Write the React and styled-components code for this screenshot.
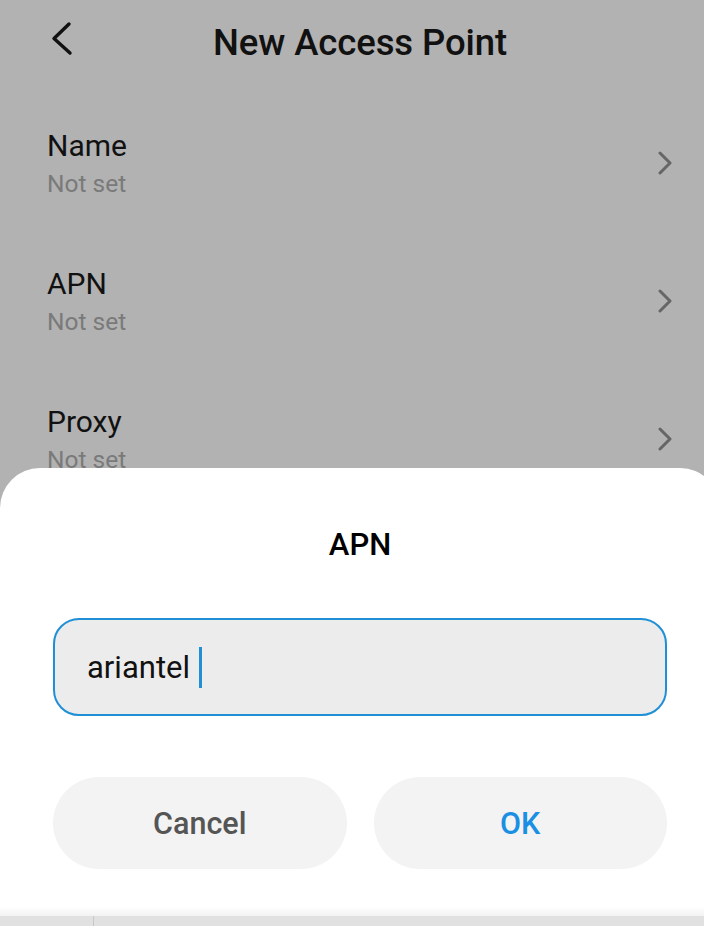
import React from "react";
import styled, { createGlobalStyle } from "styled-components";

const GlobalStyle = createGlobalStyle`
    html, body {
        margin: 0;
        padding: 0;
        background: #b2b2b2;
        font-family: Roboto, "Noto Sans", "Liberation Sans", sans-serif;
    }
`;

const Viewport = styled.div`
    width: 704px;
    height: 926px;
    overflow: hidden;
`;

const Screen = styled.div`
    position: relative;
    width: 720px;
    height: 926px;
    background: #b2b2b2;
`;

const Header = styled.div`
    display: flex;
    align-items: center;
    justify-content: center;
    position: relative;
    height: 84px;
`;

const BackButton = styled.div`
    position: absolute;
    left: 48px;
    top: 20px;
    width: 30px;
    height: 38px;
`;

const Title = styled.h1`
    margin: 0;
    font-size: 36.5px;
    font-weight: 500;
    color: #111;
    letter-spacing: -0.1px;
`;

const List = styled.div`
    display: flex;
    flex-direction: column;
    padding-top: 45px;
`;

const Row = styled.div`
    display: flex;
    justify-content: space-between;
    align-items: flex-start;
    height: 138px;
    padding: 0 47px 0 47px;
    box-sizing: border-box;
`;

const RowText = styled.div`
    display: flex;
    flex-direction: column;
    gap: 6px;
`;

const Label = styled.div`
    font-size: 30px;
    line-height: 34px;
    color: #111;
`;

const Sub = styled.div`
    font-size: 24.5px;
    line-height: 30px;
    color: #7a7a7a;
`;

const Chevron = styled.div`
    display: flex;
    margin-top: 22px;
`;

const Sheet = styled.div`
    position: absolute;
    left: 0;
    right: 0;
    bottom: 0;
    height: 458px;
    background: #fff;
    border-radius: 40px 40px 0 0;
    display: flex;
    flex-direction: column;
`;

const SheetTitle = styled.div`
    text-align: center;
    font-size: 31px;
    font-weight: 500;
    color: #000;
    margin-top: 59px;
    line-height: 36px;
`;

const InputBox = styled.div`
    margin: 55px 53px 0 53px;
    height: 98px;
    box-sizing: border-box;
    border: 2px solid #1f8fd6;
    border-radius: 26px;
    background: #ececec;
    display: flex;
    align-items: center;
    padding-left: 32px;
    font-size: 31px;
    color: #111;
`;

const Caret = styled.span`
    display: inline-block;
    width: 3px;
    height: 41px;
    background: #1f8fd6;
    margin-left: 9px;
`;

const Buttons = styled.div`
    display: grid;
    grid-template-columns: 1fr 1fr;
    gap: 27px;
    margin: 61px 53px 0 53px;
`;

const Button = styled.div`
    height: 92px;
    border-radius: 46px;
    background: #f3f3f3;
    display: flex;
    align-items: center;
    justify-content: center;
    font-size: 30.5px;
    font-weight: 500;
    color: ${(p) => (p.$primary ? "#1a8fe3" : "#555")};
`;

const Spacer = styled.div`
    flex: 1;
    background: linear-gradient(to bottom, #fff 80%, #f2f2f2 100%);
`;

const Keyboard = styled.div`
    height: 10px;
    background: #e1e1e1;
    display: flex;
`;

const KeyDivider = styled.div`
    width: 1px;
    margin-left: 93px;
    background: #c8c8c8;
`;

const BackIcon = () => (
    <svg width="30" height="38" viewBox="0 0 30 38">
        <path d="M21 4 L6 18.5 L22 33" fill="none" stroke="#111" strokeWidth="3.4" strokeLinecap="round" strokeLinejoin="round" />
    </svg>
);

const RightIcon = () => (
    <svg width="16" height="24" viewBox="0 0 16 24">
        <path d="M3 2 L13 12 L3 22" fill="none" stroke="#666" strokeWidth="3" strokeLinecap="round" strokeLinejoin="round" />
    </svg>
);

const rows = ["Name", "APN", "Proxy"];

export default function App() {
    return (
        <>
            <GlobalStyle />
            <Viewport>
                <Screen>
                    <Header>
                        <BackButton>
                            <BackIcon />
                        </BackButton>
                        <Title>New Access Point</Title>
                    </Header>
                    <List>
                        {rows.map((r) => (
                            <Row key={r}>
                                <RowText>
                                    <Label>{r}</Label>
                                    <Sub>Not set</Sub>
                                </RowText>
                                <Chevron>
                                    <RightIcon />
                                </Chevron>
                            </Row>
                        ))}
                    </List>
                    <Sheet>
                        <SheetTitle>APN</SheetTitle>
                        <InputBox>
                            ariantel
                            <Caret />
                        </InputBox>
                        <Buttons>
                            <Button>Cancel</Button>
                            <Button $primary>OK</Button>
                        </Buttons>
                        <Spacer />
                        <Keyboard>
                            <KeyDivider />
                        </Keyboard>
                    </Sheet>
                </Screen>
            </Viewport>
        </>
    );
}
